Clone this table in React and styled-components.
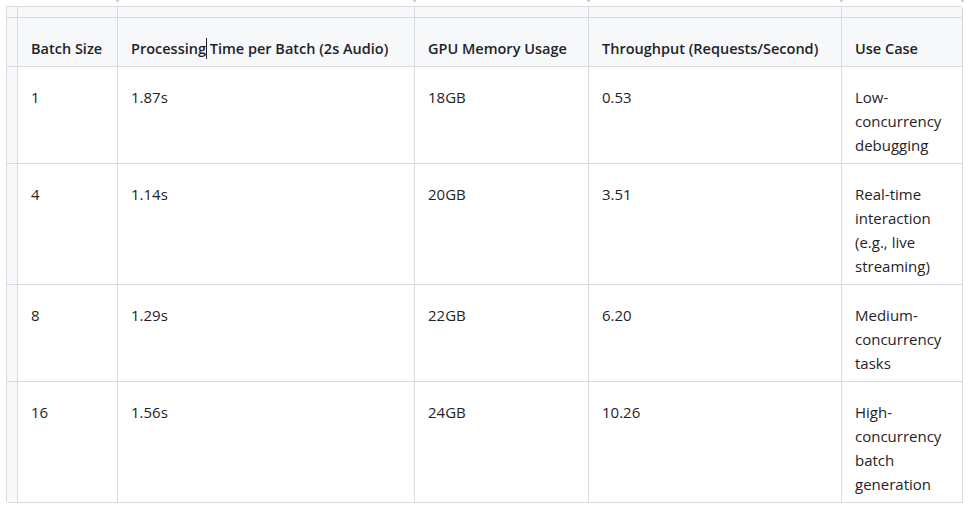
import { Fragment } from "react";
import styled, { createGlobalStyle } from "styled-components";

const GlobalStyle = createGlobalStyle`
    body {
        margin: 0;
        background: #ffffff;
        font-family: "Open Sans", "Noto Sans", sans-serif;
        color: #1f2328;
    }
`;

const Page = styled.div`
    padding: 6px 0 0 6px;
`;

const Table = styled.div`
    display: grid;
    grid-template-columns: 11px 100px 297px 174px 253px 121px;
    width: max-content;
    border-left: 1px solid #d8dce1;
    border-top: 1px solid #d8dce1;
    border-top-right-radius: 4px;
    border-bottom-left-radius: 3px;
    font-size: 15px;
    line-height: 24px;
`;

const Cell = styled.div`
    position: relative;
    padding: ${({ $head }) => ($head ? "19px 13px 5px" : "18px 13px 6px")};
    border-right: 1px solid #d8dce1;
    border-bottom: 1px solid #d8dce1;
    background: ${({ $head }) => ($head ? "#f6f8fa" : "#ffffff")};
    font-weight: ${({ $head }) => ($head ? 600 : 400)};
    font-size: ${({ $head }) => ($head ? "14.5px" : "15px")};
    white-space: ${({ $head }) => ($head ? "nowrap" : "normal")};
    overflow-wrap: break-word;
`;

// the narrow grey strips along the top and the left side
const Gutter = styled.div`
    position: relative;
    height: ${({ $top }) => ($top ? "10px" : "auto")};
    background: #f6f8fa;
    border-right: 1px solid #d8dce1;
    border-bottom: 1px solid #d8dce1;

    ${({ $handle }) => $handle && `
        &::before {
            content: "";
            position: absolute;
            top: -8px;
            right: -2px;
            width: 3px;
            height: 3px;
            border-radius: 50%;
            background: #c9ced4;
        }
    `}
`;

const Caret = styled.span`
    display: inline-block;
    width: 1px;
    height: 21px;
    margin: 0 -1px 0 0;
    vertical-align: -5px;
    background: #1f2328;
`;

const head = [
    "Batch Size",
    "Processing Time per Batch (2s Audio)",
    "GPU Memory Usage",
    "Throughput (Requests/Second)",
    "Use Case",
];

const rows = [
    ["1", "1.87s", "18GB", "0.53", "Low-concurrency debugging"],
    ["4", "1.14s", "20GB", "3.51", "Real-time interaction (e.g., live streaming)"],
    ["8", "1.29s", "22GB", "6.20", "Medium-concurrency tasks"],
    ["16", "1.56s", "24GB", "10.26", "High-concurrency batch generation"],
];

export default function App() {
    return (
        <>
            <GlobalStyle />
            <Page>
                <Table>
                    <Gutter $top />
                    {head.map((h) => (
                        <Gutter key={h} $top $handle />
                    ))}

                    <Gutter />
                    <Cell $head>{head[0]}</Cell>
                    <Cell $head>
                        Processing<Caret /> Time per Batch (2s Audio)
                    </Cell>
                    {head.slice(2).map((h) => (
                        <Cell key={h} $head>{h}</Cell>
                    ))}

                    {rows.map((row) => (
                        <Fragment key={row[0]}>
                            <Gutter />
                            {row.map((value, i) => (
                                <Cell key={i}>{value}</Cell>
                            ))}
                        </Fragment>
                    ))}
                </Table>
            </Page>
        </>
    );
}
